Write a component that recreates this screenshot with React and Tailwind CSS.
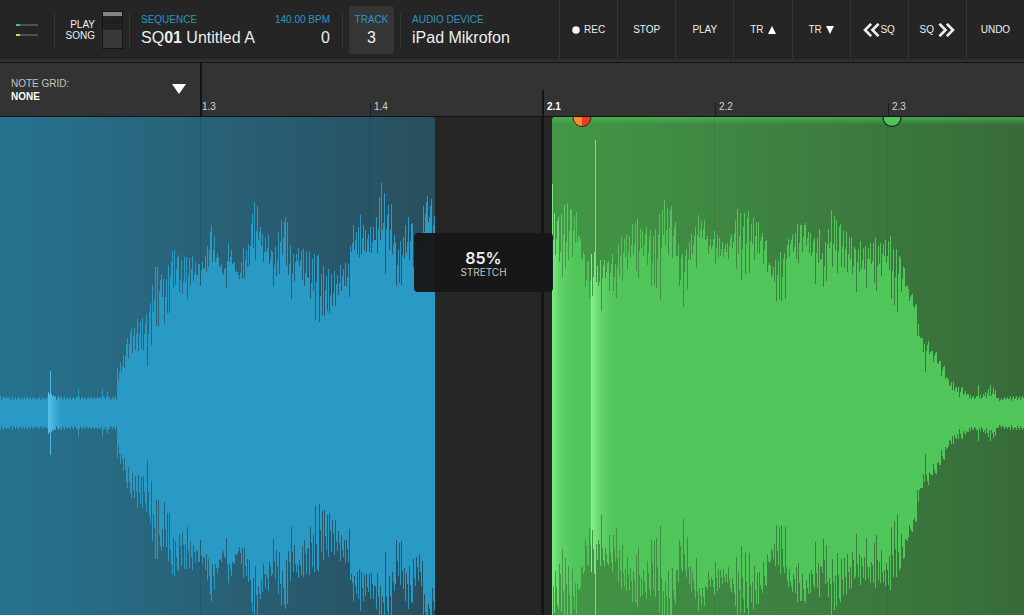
import React, { useState } from 'react';

const CENTER = 413;
const TOP = 117;

// [x, crest, trough] - y values of the upper edge, the lower edge is mirrored
const BLUE_WAVE = [
  [0, 396, 400], [47, 397, 400], [48, 392, 394], [53, 395, 397], [55, 396, 400], [77, 397, 400], [78, 389, 398],
  [79, 397, 400], [100, 397, 399], [102, 389, 396], [104, 397, 399], [107, 392, 397], [109, 397, 400], [115, 396, 400],
  [117, 368, 381], [123, 355, 368], [127, 338, 359], [131, 328, 353], [137, 319, 351], [142, 318, 350], [146, 314, 366],
  [150, 303, 345], [152, 285, 312], [155, 267, 326], [157, 267, 326], [161, 275, 297], [163, 279, 324], [168, 265, 313],
  [172, 252, 288], [174, 250, 285], [178, 255, 292], [186, 257, 299], [192, 256, 281], [199, 264, 286], [205, 256, 272],
  [207, 246, 267], [211, 225, 262], [214, 236, 262], [218, 258, 266], [225, 268, 288], [228, 243, 262], [231, 250, 264],
  [238, 275, 279], [243, 248, 279], [248, 244, 266], [252, 214, 248], [254, 202, 260], [257, 206, 240], [262, 234, 262],
  [268, 235, 264], [272, 252, 287], [278, 232, 274], [281, 220, 255], [285, 217, 266], [287, 222, 275], [290, 245, 299],
  [298, 248, 266], [303, 249, 286], [309, 251, 299], [314, 254, 320], [318, 254, 322], [323, 266, 316], [328, 269, 313],
  [334, 271, 306], [340, 265, 291], [345, 263, 286], [348, 264, 297], [350, 246, 252], [353, 225, 250], [358, 227, 257],
  [360, 215, 254], [365, 230, 252], [370, 227, 253], [376, 217, 253], [379, 197, 240], [381, 183, 230], [384, 193, 274],
  [388, 205, 250], [391, 204, 254], [395, 242, 286], [400, 241, 285], [405, 225, 253], [408, 217, 260], [412, 223, 267],
  [418, 245, 272], [421, 240, 265], [423, 206, 232], [427, 196, 222], [431, 199, 238], [435, 210, 258],
];

const GREEN_WAVE = [
  [552, 200, 240], [554, 213, 255], [558, 217, 262], [561, 214, 277], [564, 205, 268], [567, 204, 260], [571, 210, 257],
  [576, 212, 242], [580, 239, 258], [584, 255, 287], [588, 260, 298], [591, 254, 296], [594, 252, 293], [600, 260, 311],
  [604, 260, 278], [608, 261, 291], [612, 254, 291], [615, 264, 298], [618, 244, 276], [621, 237, 281], [626, 235, 269],
  [632, 224, 255], [637, 219, 278], [642, 231, 256], [646, 227, 265], [650, 230, 286], [655, 229, 288], [659, 214, 300],
  [664, 200, 245], [667, 208, 255], [671, 206, 258], [675, 222, 256], [678, 244, 286], [682, 254, 307], [686, 249, 289],
  [691, 234, 254], [695, 227, 268], [698, 215, 238], [704, 220, 240], [707, 236, 254], [714, 231, 264], [719, 238, 256],
  [727, 243, 259], [731, 234, 248], [735, 220, 269], [737, 209, 254], [740, 213, 280], [744, 213, 274], [748, 211, 273],
  [753, 217, 260], [758, 222, 254], [762, 233, 264], [766, 240, 272], [770, 265, 277], [775, 260, 301], [780, 252, 301],
  [784, 253, 299], [788, 239, 257], [792, 234, 252], [797, 224, 263], [801, 225, 252], [805, 223, 246], [810, 233, 256],
  [814, 238, 284], [819, 229, 260], [822, 253, 287], [825, 242, 281], [828, 229, 248], [831, 210, 267], [836, 220, 273],
  [840, 224, 267], [846, 232, 272], [851, 238, 274], [855, 249, 292], [860, 241, 269], [865, 246, 288], [870, 243, 264],
  [875, 238, 291], [880, 243, 276], [885, 240, 263], [890, 236, 299], [896, 249, 312], [900, 258, 292], [904, 268, 287],
  [908, 289, 301], [912, 294, 306], [916, 304, 336], [918, 324, 336], [922, 338, 352], [924, 344, 372], [928, 341, 354],
  [932, 351, 362], [936, 352, 363], [940, 361, 376], [944, 366, 379], [948, 380, 386], [953, 382, 391], [958, 387, 397],
  [962, 387, 395], [970, 395, 399], [977, 396, 400], [978, 385, 398], [980, 395, 399], [985, 392, 398], [990, 385, 396],
  [995, 390, 398], [998, 398, 401], [1010, 396, 401], [1024, 395, 400],
];

const noise = (n) => {
  const v = Math.sin(n * 12.9898) * 43758.5453;
  return v - Math.floor(v);
};

function edgeAt(points, x) {
  let i = 0;
  while (i < points.length - 2 && points[i + 1][0] <= x) i++;
  const [x0, c0, t0] = points[i];
  const [x1, c1, t1] = points[i + 1];
  // the measured columns keep their peak and the notch right after it
  if (x === x0) return c0;
  if (x === x0 + 1 && x !== x1) return t0;
  const k = (x - x0) / (x1 - x0);
  const crest = c0 + (c1 - c0) * k;
  const depth = t0 + (t1 - t0) * k - crest;
  const r = noise(x);
  if ((x - x0) % 3 === 0) return crest + depth * r * 0.25;
  if ((x - x0) % 3 === 1) return crest + depth * (r > 0.4 ? 0.95 : 0.6);
  return crest + depth * (0.4 + r * 0.25);
}

function wavePath(points, spikes = {}) {
  const start = points[0][0];
  const end = points[points.length - 1][0];
  let upper = '';
  let lower = '';
  for (let x = start; x < end; x++) {
    const y = Math.round(spikes[x] ?? edgeAt(points, x));
    upper += `V${y - TOP}H${x - start + 1}`;
    lower = `H${x - start}` + lower;
    lower = `V${2 * CENTER - y - TOP}` + lower;
  }
  return `M0 ${CENTER - TOP}${upper}${lower}Z`;
}

const BLUE_PATH = wavePath(BLUE_WAVE, { 50: 371 });
const GREEN_PATH = wavePath(GREEN_WAVE, { 552: 184, 595: 140 });

const BEATS = [
  { label: '1.3', tick: '' },
  { label: '1.4', tick: 'h-[13px] w-px bg-[#1c1c1c]' },
  { label: '2.1', tick: 'h-[26px] w-[2px] bg-[#141414]', bold: true },
  { label: '2.2', tick: 'h-[13px] w-px bg-[#1c1c1c]' },
  { label: '2.3', tick: 'h-[13px] w-px bg-[#1c1c1c]' },
];

function Chevrons({ flip }) {
  return (
    <svg width="17" height="14" viewBox="0 0 17 14" fill="none" stroke="#eeeee6" strokeWidth="2.6" className={flip ? 'rotate-180' : ''}>
      <path d="M8.2 .8L2 7l6.2 6.2M15.6 .8L9.4 7l6.2 6.2" />
    </svg>
  );
}

function TransportButton({ children, ...props }) {
  return (
    <button
      type="button"
      className="flex items-center justify-center gap-1 border-l border-[#343434] text-[10px] text-[#eeeeee] hover:bg-[#2d2d2d]"
      {...props}
    >
      {children}
    </button>
  );
}

function Divider() {
  return <div className="h-9 w-px shrink-0 bg-[#343434]" />;
}

function Header() {
  const [songMode, setSongMode] = useState(false);

  return (
    <header className="flex h-[59px] items-stretch justify-between bg-[#252525] text-[#eeeeee]">
      <div className="flex items-center">
        {/* Level meters */}
        <div className="flex w-[54px] flex-col gap-2 pl-4">
          <div className="h-[2px] w-[22px] bg-[#505050]"><div className="h-full w-1 bg-[#4cc257]" /></div>
          <div className="h-[2px] w-[22px] bg-[#505050]"><div className="h-full w-1 bg-[#efd12f]" /></div>
        </div>
        <Divider />

        <div className="flex w-[74px] items-center justify-end gap-[7px] pr-[6px]">
          <span id="mode-label" className="text-right text-[10px] leading-[11px]">PLAY<br />SONG</span>
          <button
            type="button"
            role="switch"
            aria-checked={songMode}
            aria-labelledby="mode-label"
            onClick={() => setSongMode(!songMode)}
            className="flex h-[38px] w-[21px] flex-col border border-[#141414] bg-[#383838]"
          >
            <span className="h-1 w-full bg-[#858585]" />
            <span className="flex h-[14px] w-full items-center justify-center bg-[#222222]">
              <span className="h-[3px] w-4 bg-[#14260f]" />
            </span>
          </button>
        </div>
        <Divider />

        <div className="flex w-[212px] flex-col pr-[12px] pl-[11px]">
          <div className="flex justify-between text-[10px] leading-4 text-[#2a96c4]">
            <span>SEQUENCE</span>
            <span>140.00 BPM</span>
          </div>
          <div className="flex justify-between text-[16px] leading-5">
            <span>SQ<b>01</b> Untitled A</span>
            <span>0</span>
          </div>
        </div>
        <Divider />

        <button type="button" className="mx-[6px] flex h-12 w-[45px] flex-col items-center justify-center rounded-[3px] bg-[#353535]">
          <span className="text-[10px] leading-4 text-[#2a96c4]">TRACK</span>
          <span className="text-[16px] leading-5">3</span>
        </button>
        <Divider />

        <div className="flex flex-col pl-[11px]">
          <span className="text-[10px] leading-4 text-[#2a96c4]">AUDIO DEVICE</span>
          <span className="text-[16px] leading-5">iPad Mikrofon</span>
        </div>
      </div>

      <div className="grid w-[465px] shrink-0 grid-cols-8">
        <TransportButton>
          <svg width="8" height="8" viewBox="0 0 8 8" fill="#f4f4ee"><circle cx="4" cy="4" r="3.8" /></svg>
          REC
        </TransportButton>
        <TransportButton>STOP</TransportButton>
        <TransportButton>PLAY</TransportButton>
        <TransportButton aria-label="Previous track">
          TR
          <svg width="8" height="8" viewBox="0 0 8 8" fill="#ffffff"><path d="M4 0l4 8H0z" /></svg>
        </TransportButton>
        <TransportButton aria-label="Next track">
          TR
          <svg width="8" height="8" viewBox="0 0 8 8" fill="#ffffff"><path d="M4 8l4-8H0z" /></svg>
        </TransportButton>
        <TransportButton aria-label="Previous sequence">
          <span className="flex items-center"><Chevrons />SQ</span>
        </TransportButton>
        <TransportButton aria-label="Next sequence">SQ<Chevrons flip /></TransportButton>
        <TransportButton>UNDO</TransportButton>
      </div>
    </header>
  );
}

function Ruler() {
  return (
    <div className="flex h-[58px] border-t-[3px] border-[#303030]">
      <div className="flex flex-1 border-y border-[#141414] bg-[#333333]">
        <div className="relative flex w-[202px] shrink-0 flex-col justify-center border-r-2 border-[#141414] pl-[11px]">
          <label htmlFor="note-grid" className="text-[10px] leading-[13px] text-[#c4c4c4]">NOTE GRID:</label>
          <select
            id="note-grid"
            defaultValue="none"
            className="w-full appearance-none bg-transparent text-[10px] leading-[13px] font-bold text-white outline-none"
          >
            <option value="none">NONE</option>
            <option value="8">1/8</option>
            <option value="16">1/16</option>
          </select>
          <svg width="14" height="10" viewBox="0 0 14 10" fill="#ffffff" className="pointer-events-none absolute top-[21px] right-[14px]">
            <path d="M0 0h14L7 10z" />
          </svg>
        </div>
        <div className="grid flex-1 grid-cols-[168fr_172fr_173fr_173fr_136fr]">
          {BEATS.map((beat) => (
            <div key={beat.label} className="flex items-end">
              <div className={beat.tick} />
              <span className={`pb-[3px] text-[10px] leading-3 ${beat.tick ? 'pl-[3px]' : ''} ${beat.bold ? 'font-bold text-white' : 'text-[#d4d4d4]'}`}>
                {beat.label}
              </span>
            </div>
          ))}
        </div>
      </div>
    </div>
  );
}

function BlueClip() {
  return (
    <div className="relative overflow-hidden rounded-tr-[3px] bg-linear-to-r from-[#26738f] to-[#284f5e]">
      <svg className="absolute inset-0 h-full w-full" viewBox="0 0 435 498" preserveAspectRatio="none">
        <defs>
          <linearGradient id="blue-hit" gradientUnits="userSpaceOnUse" x1="48" x2="62" y1="0" y2="0">
            <stop offset="0" stopColor="#56c0ea" />
            <stop offset="1" stopColor="#2999c6" />
          </linearGradient>
          <clipPath id="blue-shape"><path d={BLUE_PATH} /></clipPath>
        </defs>
        <path d="M200.5 0v498M369.5 0v498" stroke="#000000" strokeOpacity="0.08" />
        <path d={BLUE_PATH} fill="#2999c6" />
        <rect x="48" width="14" height="498" fill="url(#blue-hit)" clipPath="url(#blue-shape)" />
      </svg>
    </div>
  );
}

function GreenClip() {
  return (
    <div className="relative overflow-hidden rounded-tl-[3px] bg-linear-to-r from-[#439747] to-[#376b39]">
      <div className="absolute inset-x-0 top-0 h-2 bg-linear-to-b from-[#4dba55]/70 to-transparent" />
      <svg className="absolute inset-0 h-full w-full" viewBox="0 0 472 498" preserveAspectRatio="none">
        <defs>
          <linearGradient id="green-start" gradientUnits="userSpaceOnUse" x1="0" x2="24" y1="0" y2="0">
            <stop offset="0" stopColor="#7deb82" />
            <stop offset="0.3" stopColor="#62d369" />
            <stop offset="1" stopColor="#50c559" />
          </linearGradient>
          <linearGradient id="green-hit" gradientUnits="userSpaceOnUse" x1="39" x2="63" y1="0" y2="0">
            <stop offset="0" stopColor="#86f48b" />
            <stop offset="0.4" stopColor="#62d369" />
            <stop offset="1" stopColor="#50c559" />
          </linearGradient>
          <clipPath id="green-shape"><path d={GREEN_PATH} /></clipPath>
        </defs>
        <path d="M162.5 0v498M335.5 0v498" stroke="#000000" strokeOpacity="0.08" />
        <path d={GREEN_PATH} fill="#50c559" />
        <g clipPath="url(#green-shape)">
          <rect width="24" height="498" fill="url(#green-start)" />
          <rect x="39" width="24" height="498" fill="url(#green-hit)" />
        </g>
      </svg>
      {/* Warp markers hang from the top edge of the clip */}
      <svg className="absolute top-0 left-[20px]" width="20" height="11" viewBox="0 0 20 11">
        <path d="M10 -8a9 9 0 0 0 0 18z" fill="#f98b2e" />
        <path d="M10 -8a9 9 0 0 1 0 18z" fill="#f23a1d" />
        <circle cx="10" cy="0.5" r="9" fill="none" stroke="#1d2a1d" />
      </svg>
      <svg className="absolute top-0 left-[72%] -translate-x-1/2" width="20" height="11" viewBox="0 0 20 11">
        <circle cx="10" cy="0.5" r="9" fill="#50c559" stroke="#1d2a1d" strokeWidth="1.3" />
      </svg>
    </div>
  );
}

function StretchGap() {
  return (
    <div className="relative z-10 flex justify-end bg-[#262626]">
      {/* Bar line of 2.1 */}
      <div className="mr-2 w-[3px] bg-[#151515]" />
      <div
        role="status"
        className="absolute top-[116px] -right-px -left-[21px] flex h-[59px] flex-col items-center justify-center rounded bg-[#161616]/95 pt-1 font-[Inter,sans-serif]"
      >
        <span className="text-[16px] leading-4 font-semibold text-[#eeeeee]">85%</span>
        <span className="text-[10px] leading-[13px] text-[#c4c4c4]">STRETCH</span>
      </div>
    </div>
  );
}

export default function App() {
  return (
    <div className="flex min-h-screen flex-col bg-[#262626] font-['Liberation_Sans',Arial,sans-serif]">
      <Header />
      <Ruler />
      <main className="grid flex-1 grid-cols-[435fr_117fr_472fr]">
        <BlueClip />
        <StretchGap />
        <GreenClip />
      </main>
    </div>
  );
}
